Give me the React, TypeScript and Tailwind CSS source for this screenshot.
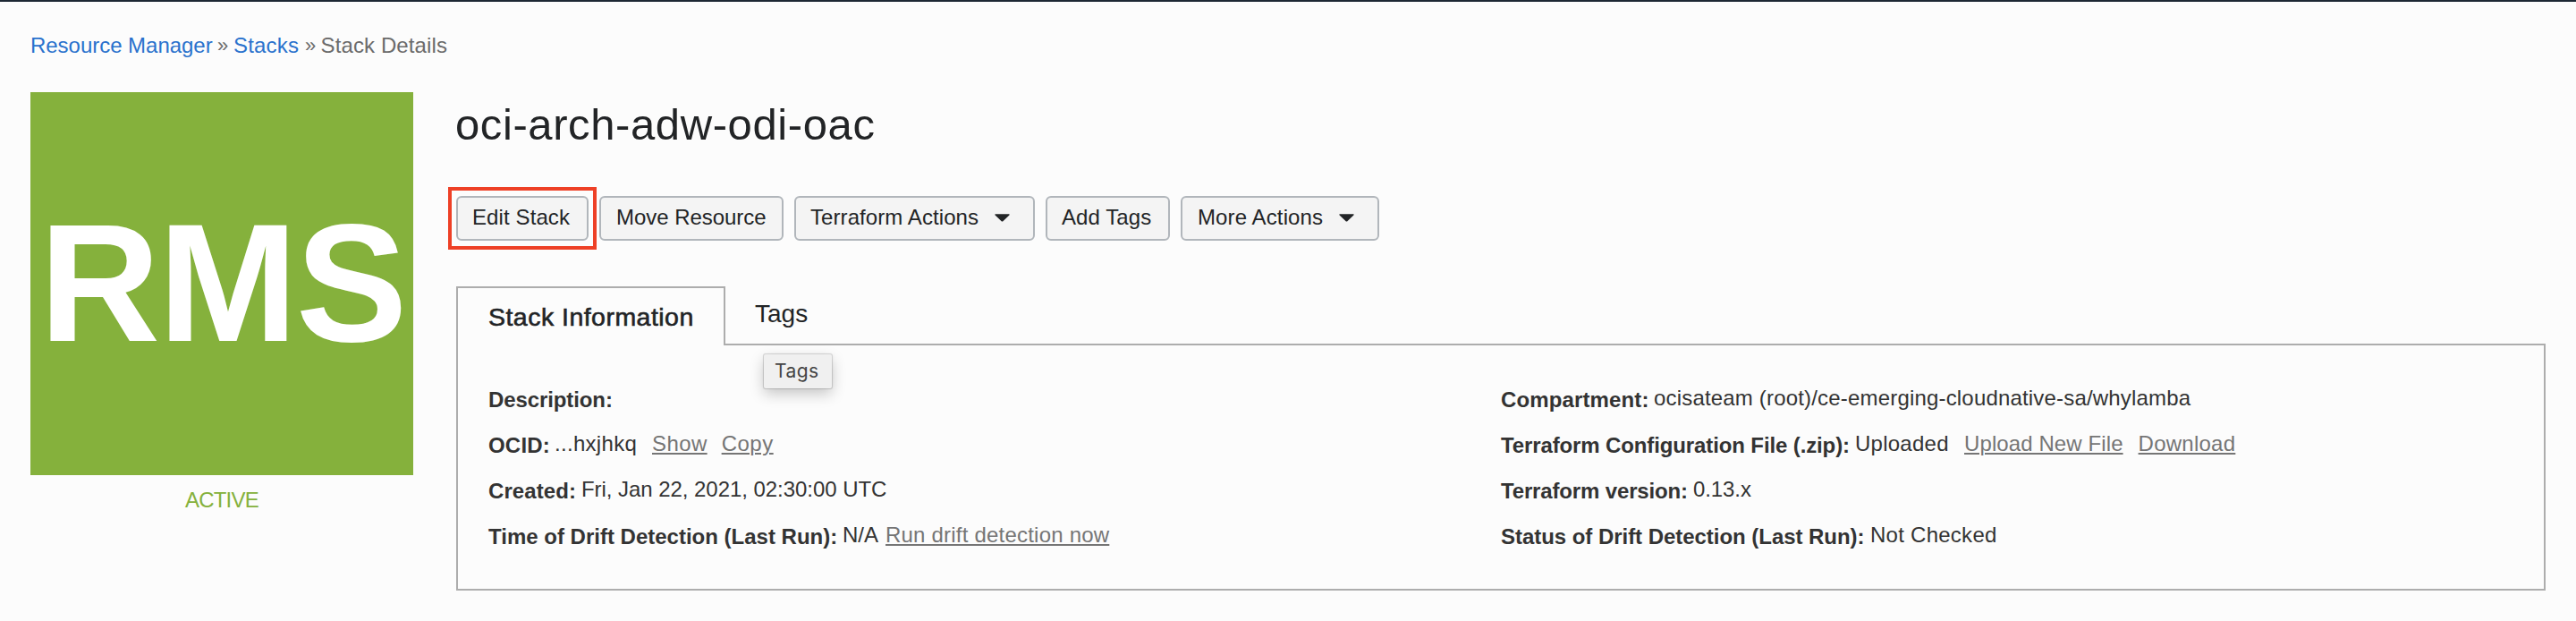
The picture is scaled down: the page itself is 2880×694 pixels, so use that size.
import type { ReactNode } from "react";

function Caret({ className }: { className: string }) {
  return (
    <svg width="17" height="9" viewBox="0 0 17 9" className={className} aria-hidden="true">
      <path d="M1.2.2h14.6c.9 0 1.1.7.6 1.2L9.6 7.9c-.7.7-1.5.7-2.2 0L.6 1.4C.1.9.3.2 1.2.2z" fill="#222426" />
    </svg>
  );
}

function ActionButton({ className, children }: { className: string; children: ReactNode }) {
  return (
    <button
      className={`flex h-[50px] shrink-0 items-center rounded-[6px] border-2 border-[#b1b6bb] bg-[#f4f4f4] pb-[2px] text-left text-[24px] leading-[28px] whitespace-nowrap text-[#222426] ${className}`}
    >
      {children}
    </button>
  );
}

function Field({ label, labelClass, children }: { label: string; labelClass: string; children?: ReactNode }) {
  return (
    <div className="flex h-[30px] items-start whitespace-nowrap">
      <dt className={`mt-[2px] shrink-0 font-bold ${labelClass}`}>{label}</dt>
      <dd className="flex">{children}</dd>
    </div>
  );
}

function TextLink({ className, children }: { className: string; children: ReactNode }) {
  return (
    <a href="#" className={`text-[#757575] underline decoration-2 underline-offset-[2px] ${className}`}>
      {children}
    </a>
  );
}

export default function App() {
  return (
    <div className="h-[694px] w-[2880px] overflow-hidden border-t-2 border-[#1d2834] bg-[#fcfcfc] pl-[34px] font-['Liberation_Sans',Arial,sans-serif] text-[24px] leading-[28px] text-[#333333]">
      <nav className="flex pt-[35px] whitespace-nowrap text-[#6b6b6b]">
        <a href="#" className="w-[209px] tracking-[-0.03px] text-[#2a72cd]">Resource Manager</a>
        <span className="w-[18px] text-[22px]">»</span>
        <a href="#" className="w-[80px] tracking-[0.19px] text-[#2a72cd]">Stacks</a>
        <span className="w-[17.5px] text-[22px]">»</span>
        <span className="tracking-[0.12px]">Stack Details</span>
      </nav>

      <div className="mt-[38px] flex">
        <aside className="w-[428px] shrink-0">
          <div className="flex h-[428px] items-center bg-[#85b13c] pl-[10px] text-[187px] leading-[210px] font-bold tracking-[-2px] text-white">
            RMS
          </div>
          <div className="mt-[14px] pl-[173px] tracking-[-0.8px] text-[#85b13c]">ACTIVE</div>
        </aside>

        <main className="ml-[48px] w-[2336px] shrink-0 pt-[8px]">
          <h1 className="-ml-px text-[49px] leading-[56px] tracking-[0.6px] text-[#222426]">oci-arch-adw-odi-oac</h1>

          <div className="mt-[52px] flex gap-[12px]">
            <div className="relative">
              <ActionButton className="w-[148px] pl-[16px] tracking-[0.1px]">Edit Stack</ActionButton>
              <div className="pointer-events-none absolute -top-[10px] -left-[9px] h-[70px] w-[166px] border-4 border-[#ee4026]" />
            </div>
            <ActionButton className="w-[206px] pl-[17px] tracking-[-0.04px]">Move Resource</ActionButton>
            <ActionButton className="w-[269px] pl-[16px] tracking-[0.08px]">
              Terraform Actions
              <Caret className="ml-[18px]" />
            </ActionButton>
            <ActionButton className="w-[139px] pl-[16px] tracking-[0.08px]">Add Tags</ActionButton>
            <ActionButton className="w-[222px] pl-[17px] tracking-[0.12px]">
              More Actions
              <Caret className="ml-[18px]" />
            </ActionButton>
          </div>

          <div className="mt-[51px] flex text-[28px] leading-[32px] text-[#222426]">
            <div className="relative z-10 -mb-[2px] h-[66px] w-[301px] border-2 border-b-0 border-[#adadad] bg-[#fcfcfc] pt-[16px] pl-[34px] text-[28.5px] tracking-[0.47px] whitespace-nowrap [-webkit-text-stroke:0.6px_#222426]">
              Stack Information
            </div>
            <div className="relative pt-[15px] pl-[33px]">
              Tags
              <div
                role="tooltip"
                className="absolute top-[76px] left-[43px] z-20 h-[38px] w-[76px] rounded-[2px] bg-[#f0f0f0] pt-[5px] pl-[12px] font-['Inter',sans-serif] text-[21px] leading-[28px] tracking-[0.43px] text-[#444444] shadow-[0_0_1px_1px_rgba(0,0,0,0.16),0_6px_16px_rgba(0,0,0,0.22)]"
              >
                Tags
              </div>
            </div>
          </div>

          <section className="flex h-[276px] border-2 border-[#adadad] pt-[45px] pl-[34px]">
            <dl className="flex w-[1132px] flex-col gap-[21px]">
              <Field label="Description:" labelClass="tracking-[-0.1px]" />
              <Field label="OCID:" labelClass="w-[74px] tracking-[0.2px]">
                <span className="w-[109px] tracking-[0.3px]">...hxjhkq</span>
                <TextLink className="mr-[16px] tracking-[0.4px]">Show</TextLink>
                <TextLink className="tracking-[0.5px]">Copy</TextLink>
              </Field>
              <Field label="Created:" labelClass="w-[104px] tracking-[0.1px]">
                <span className="tracking-[-0.05px]">Fri, Jan 22, 2021, 02:30:00 UTC</span>
              </Field>
              <Field label="Time of Drift Detection (Last Run):" labelClass="w-[396px]">
                <span className="w-[48px]">N/A</span>
                <TextLink className="tracking-[0.21px]">Run drift detection now</TextLink>
              </Field>
            </dl>
            <dl className="flex flex-col gap-[21px]">
              <Field label="Compartment:" labelClass="w-[171px] tracking-[0.13px]">
                <span className="tracking-[0.18px]">ocisateam (root)/ce-emerging-cloudnative-sa/whylamba</span>
              </Field>
              <Field label="Terraform Configuration File (.zip):" labelClass="w-[396px] tracking-[-0.12px]">
                <span className="w-[122px] tracking-[0.25px]">Uploaded</span>
                <TextLink className="mr-[17px] tracking-[0.1px]">Upload New File</TextLink>
                <TextLink className="tracking-[0.25px]">Download</TextLink>
              </Field>
              <Field label="Terraform version:" labelClass="w-[215px] tracking-[-0.15px]">
                <span className="tracking-[-0.1px]">0.13.x</span>
              </Field>
              <Field label="Status of Drift Detection (Last Run):" labelClass="w-[413px] tracking-[-0.04px]">
                <span className="tracking-[0.26px]">Not Checked</span>
              </Field>
            </dl>
          </section>
        </main>
      </div>
    </div>
  );
}
